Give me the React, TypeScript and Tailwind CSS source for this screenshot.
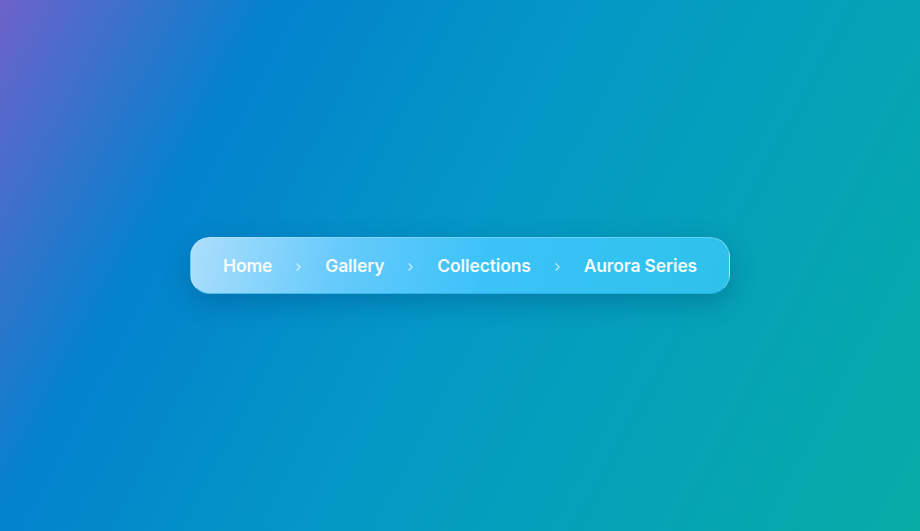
import { ChevronRight } from "lucide-react";

const CRUMBS = ["Home", "Gallery", "Collections", "Aurora Series"];

export default function App() {
  return (
    <div className="flex h-[531px] w-full items-center justify-center bg-[linear-gradient(118deg,#6e61cb_0%,#0382cd_23%,#0498c6_50%,#07aca6_100%)] font-['Inter','Noto_Sans',sans-serif]">
      <nav className="flex h-[57px] w-[540px] items-center rounded-[20px] border border-white/25 border-b-[#1fa9d6]/60 bg-[linear-gradient(105deg,#acdefc_0%,#66cafb_28%,#3cc2f8_55%,#2dc2ea_100%)] px-[32px] shadow-[0_8px_26px_rgba(0,55,105,0.3)]">
        {CRUMBS.map((label, i) => (
          <div key={label} className="flex items-center">
            {i > 0 && (
              <ChevronRight
                className="mx-[20px] h-[13px] w-[13px] translate-y-[1.5px] text-white/65"
                strokeWidth={2.2}
              />
            )}
            <span className="whitespace-nowrap text-[17.5px] font-semibold leading-none tracking-[-0.15px] text-white/95">
              {label}
            </span>
          </div>
        ))}
      </nav>
    </div>
  );
}
